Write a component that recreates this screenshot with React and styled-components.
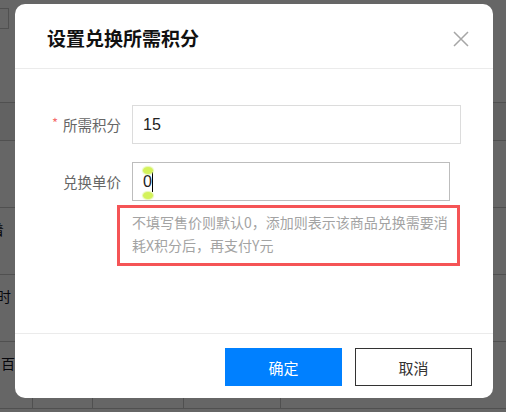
import React from "react";
import styled, { createGlobalStyle } from "styled-components";

const Global = createGlobalStyle`
  html, body { margin: 0; padding: 0; background: #fff; }
  * { box-sizing: border-box; }
`;

const CJK = `"Liberation Sans", "Noto Sans CJK SC", sans-serif`;

const Page = styled.div`
  position: relative;
  width: 506px;
  height: 412px;
  overflow: hidden;
  background: #fff;
  font-family: ${CJK};
`;

const Table = styled.div`
  display: flex;
  flex-direction: column;
`;

const Row = styled.div`
  display: flex;
  height: ${(p) => p.$h}px;
  border-bottom: 1px solid #c8c8c8;
  background: ${(p) => (p.$shade ? "#f4f4f4" : "#fff")};
  flex: none;
`;

const Cell = styled.div`
  flex: none;
  width: ${(p) => (p.$w ? `${p.$w}px` : "auto")};
  border-right: 1px solid #c8c8c8;
`;

const RowText = styled.div`
  padding-top: 14px;
  margin-left: ${(p) => p.$off}px;
  font-size: 14px;
  line-height: 16px;
  color: #10101c;
  white-space: nowrap;
`;

const TinyBox = styled.div`
  margin: 8px 0 0 -2px;
  width: 11px;
  height: 21px;
  border: 1px solid #c8c8c8;
`;

const Overlay = styled.div`
  position: absolute;
  inset: 0;
  background: rgba(0, 0, 0, 0.6);
  padding: 4px 0 0 15px;
`;

const Modal = styled.div`
  width: 478px;
  height: 394px;
  background: #fff;
  border-radius: 10px;
  display: flex;
  flex-direction: column;
  overflow: hidden;
`;

const Header = styled.div`
  height: 65px;
  flex: none;
  display: flex;
  align-items: center;
  justify-content: space-between;
  padding: 0 24px 0 32px;
  border-bottom: 1px solid #ebebeb;
`;

const Title = styled.div`
  font-family: "Noto Sans CJK SC", sans-serif;
  font-weight: 700;
  font-size: 19px;
  color: #111;
  padding-top: 2px;
`;

const Close = styled.svg`
  width: 16px;
  height: 16px;
  margin-top: 5px;
`;

const Body = styled.div`
  flex: 1;
  padding-top: 36px;
  display: flex;
  flex-direction: column;
  border-bottom: 1px solid #ebebeb;
`;

const FormRow = styled.div`
  display: flex;
  align-items: center;
  margin-bottom: ${(p) => p.$mb}px;
`;

const Label = styled.div`
  width: 106px;
  margin-right: 11px;
  text-align: right;
  font-family: "Noto Sans CJK SC", sans-serif;
  font-size: 14.5px;
  color: #666;
  white-space: nowrap;
`;

const Star = styled.span`
  color: #f56c6c;
  font-size: 13px;
  margin-right: 5px;
  position: relative;
  top: -3px;
`;

const Field = styled.div`
  position: relative;
  width: ${(p) => p.$w}px;
  height: 39px;
  border: 1px solid ${(p) => (p.$focus ? "#bdbdbd" : "#dcdcdc")};
  padding-left: 10px;
  display: flex;
  align-items: center;
  font-family: "Liberation Sans", sans-serif;
  font-size: 16px;
  color: #222;
`;

const Caret = styled.span`
  display: inline-block;
  width: 1px;
  height: 20px;
  background: #000;
`;

const Handle = styled.span`
  position: absolute;
  left: 10px;
  ${(p) => (p.$bottom ? "top: 29px;" : "top: 4px;")}
  width: 10px;
  height: 7px;
  border-radius: 50%;
  background: #d4f25a;
  box-shadow: 0 0 1px 1px rgba(220, 245, 140, 0.7);
`;

const Hint = styled.div`
  margin-left: 102px;
  width: 343px;
  border: 3px solid #f55456;
  padding: 3px 4px 6px 12px;
  font-family: "Noto Sans CJK SC", sans-serif;
  font-size: 14px;
  line-height: 23px;
  color: #a3a3a3;
`;

const Footer = styled.div`
  flex: none;
  height: 64px;
  display: flex;
  justify-content: flex-end;
  align-items: flex-start;
  gap: 13px;
  padding: 14px 21px 0 0;
`;

const Button = styled.button`
  width: 117px;
  height: 38px;
  border: 1px solid ${(p) => (p.$primary ? "#0080ff" : "#333")};
  background: ${(p) => (p.$primary ? "#0080ff" : "#fff")};
  color: ${(p) => (p.$primary ? "#fff" : "#333")};
  font-family: "Noto Sans CJK SC", sans-serif;
  font-size: 15px;
  padding: 0;
  border-radius: 0;
`;

export default function App() {
  return (
    <Page>
      <Global />
      <Table>
        <Row $h={103}>
          <TinyBox />
        </Row>
        <Row $h={38} $shade />
        <Row $h={67} />
        <Row $h={67}>
          <RowText $off={-10}>着</RowText>
        </Row>
        <Row $h={67}>
          <RowText $off={-3}>时</RowText>
        </Row>
        <Row $h={67}>
          <Cell $w={33}>
            <RowText $off={1}>百</RowText>
          </Cell>
          <Cell $w={60} />
          <Cell $w={91} />
          <Cell $w={97} />
        </Row>
      </Table>
      <Overlay>
        <Modal>
          <Header>
            <Title>设置兑换所需积分</Title>
            <Close viewBox="0 0 16 16">
              <path d="M1 1 L15 15 M15 1 L1 15" stroke="#a6a6a6" strokeWidth="1.5" fill="none" />
            </Close>
          </Header>
          <Body>
            <FormRow $mb={18}>
              <Label>
                <Star>*</Star>所需积分
              </Label>
              <Field $w={329}>15</Field>
            </FormRow>
            <FormRow $mb={4}>
              <Label>兑换单价</Label>
              <Field $w={318} $focus>
                0<Caret />
                <Handle />
                <Handle $bottom />
              </Field>
            </FormRow>
            <Hint>不填写售价则默认0，添加则表示该商品兑换需要消耗X积分后，再支付Y元</Hint>
          </Body>
          <Footer>
            <Button $primary>确定</Button>
            <Button>取消</Button>
          </Footer>
        </Modal>
      </Overlay>
    </Page>
  );
}
